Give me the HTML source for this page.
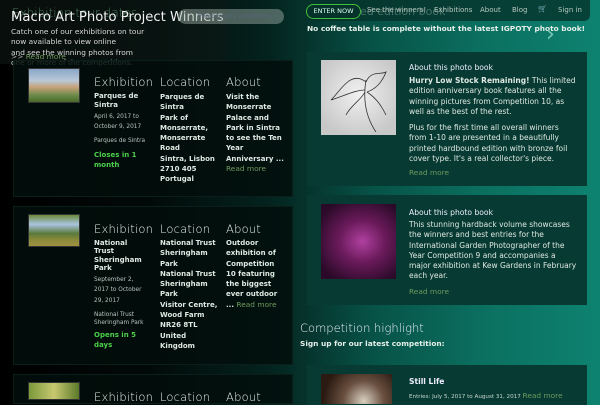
<!DOCTYPE html>
<html><head><meta charset="utf-8"><style>
*{margin:0;padding:0;box-sizing:border-box}
body{width:600px;height:400px;overflow:hidden;position:relative;font-family:"DejaVu Sans","Liberation Sans",sans-serif;color:#e6efe9;
background:linear-gradient(90deg,#000 0%,#020a09 25%,#04231e 45%,#075247 62%,#0b6f5f 80%,#0e8270 100%);}
.a{position:absolute}
.lc{position:absolute;left:13px;width:280px;background:rgba(2,14,12,.85);border:1px solid #0a1e1a}
.rc{position:absolute;left:307px;width:280px;background:#063a32;}
.h{font-size:11.5px;font-weight:300;color:#e8efe9;letter-spacing:.2px}
.b{font-size:7px;font-weight:bold;line-height:10.3px;color:#dfe8e2}
.s{font-size:5.8px;line-height:10.3px;color:#b8c4be}
.g{color:#4ccf4a;font-size:7px;line-height:10.3px;font-weight:bold}
.rm{color:#6e9a5e;font-size:7.4px;font-weight:normal}
.p{font-size:7.5px;line-height:10.3px;color:#dfe8e2}
</style></head><body>
<div class="a" style="left:0;top:0;width:227px;height:64px;background:rgba(15,25,22,.55)"></div>
<div class="a" style="left:12px;top:6px;font-size:12px;color:#4a7a5e;font-weight:300">Exhibition tour dates</div>
<div class="a" style="left:11px;top:10px;font-size:13.2px;color:#f2f2f2">Macro Art Photo Project Winners</div>
<div class="a" style="left:11px;top:27px;font-size:7.4px;line-height:10.3px;color:#d8d8d8;width:150px">Catch one of our exhibitions on tour<br>now available to view online<br>and see the winning photos from<br>one or more of the competitions.</div>
<div class="a" style="left:11px;top:52px;font-size:7.4px;color:#6e9a5e"><span style="color:#aaa">&gt;&gt;</span> Read more</div>
<div class="a" style="left:178px;top:9px;width:106px;height:15px;border-radius:8px;background:rgba(150,165,160,.5);font-size:6px;color:#567;padding:4px 0 0 20px">Photography exhibitions</div>
<div class="a" style="left:300px;top:0;width:290px;height:21px;background:rgba(5,50,42,.8);border-radius:0 0 6px 6px"></div>
<div class="a" style="left:360px;top:5px;font-size:11px;color:rgba(140,170,160,.5)">ed edition book</div>
<div class="a" style="left:306px;top:4px;width:55px;height:15px;border:1.5px solid #3fbf3a;border-radius:8px;font-size:6.5px;color:#dfe;text-align:center;line-height:12px;background:rgba(5,50,42,.9)">ENTER NOW</div>
<div class="a" style="left:367px;top:6px;font-size:7px;color:#b8c8c0">See the winners!</div>
<div class="a" style="left:434px;top:6px;font-size:7px;color:#b8c8c0">Exhibitions</div>
<div class="a" style="left:480px;top:6px;font-size:7px;color:#b8c8c0">About</div>
<div class="a" style="left:512px;top:6px;font-size:7px;color:#b8c8c0">Blog</div>
<div class="a" style="left:538px;top:5px;font-size:7px;color:#b8c8c0">🛒</div>
<div class="a" style="left:558px;top:6px;font-size:7px;color:#b8c8c0">Sign in</div>
<div class="a" style="left:307px;top:24px;font-size:7.4px;color:#e6efe9;font-weight:bold">No coffee table is complete without the latest IGPOTY photo book!</div>
<div class="a" style="left:546px;top:22px;font-size:22px;color:#7cc8b8">›</div>

<div class="lc" style="top:60px;height:137px"></div>
<div class="a" style="left:28px;top:68px;width:52px;height:35px;background:linear-gradient(180deg,#8aa7c8 0%,#b8c8d8 35%,#c7a27a 55%,#6a8a4a 80%,#4a6a2a 100%);border:1px solid #333"></div>
<div class="a h" style="left:94px;top:75px">Exhibition</div>
<div class="a b" style="left:94px;top:92px;width:60px;line-height:8.5px">Parques de Sintra</div>
<div class="a s" style="left:94px;top:112px;width:60px">April 6, 2017 to October 9, 2017</div>
<div class="a s" style="left:94px;top:136px">Parques de Sintra</div>
<div class="a g" style="left:94px;top:150px;width:50px">Closes in 1 month</div>
<div class="a h" style="left:160px;top:75px">Location</div>
<div class="a b" style="left:160px;top:92px;width:58px">Parques de Sintra<br>Park of Monserrate, Monserrate Road<br>Sintra, Lisbon 2710 405<br>Portugal</div>
<div class="a h" style="left:226px;top:75px">About</div>
<div class="a b" style="left:226px;top:92px;width:60px">Visit the Monserrate Palace and Park in Sintra to see the Ten Year Anniversary ...<br><span class="rm">Read more</span></div>

<div class="lc" style="top:206px;height:159px"></div>
<div class="a" style="left:28px;top:214px;width:52px;height:33px;background:linear-gradient(180deg,#6a8a3a 0%,#aac4e0 30%,#5a7a3a 60%,#8a8a3a 80%,#a09040 100%);border:1px solid #333"></div>
<div class="a h" style="left:94px;top:222px">Exhibition</div>
<div class="a b" style="left:94px;top:239px;width:52px;line-height:8.3px">National Trust Sheringham Park</div>
<div class="a s" style="left:94px;top:275px;width:55px">September 2, 2017 to October 29, 2017</div>
<div class="a s" style="left:94px;top:311px;width:60px;line-height:8px">National Trust Sheringham Park</div>
<div class="a g" style="left:94px;top:330px;width:50px">Opens in 5 days</div>
<div class="a h" style="left:160px;top:222px">Location</div>
<div class="a b" style="left:160px;top:238px;width:60px">National Trust Sheringham Park<br>National Trust Sheringham Park<br>Visitor Centre, Wood Farm<br>NR26 8TL<br>United Kingdom</div>
<div class="a h" style="left:226px;top:222px">About</div>
<div class="a b" style="left:226px;top:238px;width:60px">Outdoor exhibition of Competition 10 featuring the biggest ever outdoor ... <span class="rm">Read more</span></div>

<div class="lc" style="top:374px;height:30px"></div>
<div class="a" style="left:28px;top:382px;width:52px;height:18px;background:linear-gradient(90deg,#7a9a3a,#c8c870,#5a7a2a);border:1px solid #333"></div>
<div class="a h" style="left:94px;top:390px">Exhibition</div>
<div class="a h" style="left:160px;top:390px">Location</div>
<div class="a h" style="left:226px;top:390px">About</div>

<div class="rc" style="top:52px;height:134px"></div>
<div class="a" style="left:321px;top:60px;width:75px;height:75px;background:radial-gradient(circle at 50% 45%,#f0f0f0,#c8c8c8 80%);"></div>
<svg class="a" style="left:321px;top:60px" width="75" height="75"><g stroke="#333" fill="none" stroke-width=".8"><path d="M45 20 Q40 50 55 72"/><path d="M45 22 C30 10 20 30 10 40 C25 35 35 30 44 30"/><path d="M45 22 C50 10 60 15 65 12 C60 25 52 30 46 32"/><path d="M44 32 C40 40 30 45 25 55"/><path d="M46 32 C55 38 60 45 65 55"/></g></svg>
<div class="a" style="left:409px;top:63px;font-size:7.6px;color:#eef">About this photo book</div>
<div class="a p" style="left:409px;top:76px;width:172px"><b>Hurry Low Stock Remaining!</b> This limited edition anniversary book features all the winning pictures from Competition 10, as well as the best of the rest.</div>
<div class="a p" style="left:409px;top:123px;width:160px">Plus for the first time all overall winners from 1-10 are presented in a beautifully printed hardbound edition with bronze foil cover type. It's a real collector's piece.</div>
<div class="a rm" style="left:409px;top:168px">Read more</div>

<div class="rc" style="top:195px;height:110px"></div>
<div class="a" style="left:321px;top:204px;width:75px;height:75px;background:radial-gradient(ellipse at 55% 50%,#b040a0 0%,#6a1a5a 40%,#2a0a28 85%)"></div>
<div class="a" style="left:409px;top:208px;font-size:7.6px;color:#eef">About this photo book</div>
<div class="a p" style="left:409px;top:220px;width:168px">This stunning hardback volume showcases the winners and best entries for the International Garden Photographer of the Year Competition 9 and accompanies a major exhibition at Kew Gardens in February each year.</div>
<div class="a rm" style="left:409px;top:287px">Read more</div>

<div class="a" style="left:300px;top:321px;font-size:11.5px;font-weight:300;color:#eef">Competition highlight</div>
<div class="a" style="left:300px;top:339px;font-size:7.4px;color:#e6efe9;font-weight:bold">Sign up for our latest competition:</div>

<div class="rc" style="top:365px;height:40px"></div>
<div class="a" style="left:321px;top:374px;width:71px;height:30px;background:radial-gradient(circle at 60% 90%,#d8d0c0 0%,#6a5040 40%,#2a1a12 80%)"></div>
<div class="a" style="left:409px;top:377px;font-size:7.6px;color:#eef;font-weight:bold">Still Life</div>
<div class="a" style="left:409px;top:391px;font-size:5.6px;color:#c8d8d0">Entries: July 5, 2017 to August 31, 2017 <span class="rm">Read more</span></div>
</body></html>
